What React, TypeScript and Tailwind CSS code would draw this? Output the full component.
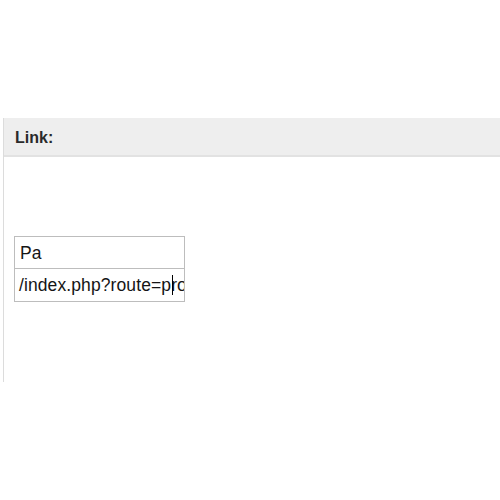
import React from 'react';

const font = { fontFamily: '"Liberation Sans", Arial, sans-serif' };

export default function App() {
  return (
    <div className="w-[500px] h-[500px] bg-white pt-[118px] pl-[3px]" style={font}>
      <div className="h-[264px] border-l border-[#dcdcdc]">
        <div className="h-[39px] bg-[#eeeeee] border-b-2 border-[#e2e2e2] flex items-center pl-[11px] pt-[2px]">
          <span className="text-[16px] font-bold text-[#2a2a2a]">Link:</span>
        </div>
        <div className="pt-[79px] pl-[10px]">
          <div className="w-[171px]">
            <div className="h-[33px] border border-[#bdbdbd] flex items-center pl-[5px] pt-[1px] text-[17.5px] text-[#151515]">
              Pa
            </div>
            <div className="h-[33px] border border-t-0 border-[#bdbdbd] pl-[4px] pr-[3px] pt-[6px] text-[17.5px] tracking-[0.1px] leading-[20px] text-[#151515] overflow-hidden whitespace-nowrap">
              <span className="relative">
                /index.php?route=p
                <span className="absolute right-[-2px] top-0 w-px h-[20px] bg-black" />
              </span>
              roduct
            </div>
          </div>
        </div>
      </div>
    </div>
  );
}
